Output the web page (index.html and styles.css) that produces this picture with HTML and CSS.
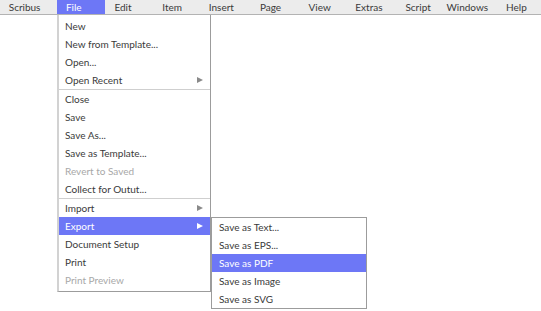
FILE: index.html
```html
<!DOCTYPE html>
<html>
<head>
  <title>Scribus File Menu</title>
  <link rel="stylesheet" href="styles.css">
</head>
<body>
  <div class="menubar">
    <div class="bar-item">Scribus</div>
    <div class="bar-item active">File</div>
    <div class="bar-item">Edit</div>
    <div class="bar-item">Item</div>
    <div class="bar-item">Insert</div>
    <div class="bar-item">Page</div>
    <div class="bar-item">View</div>
    <div class="bar-item">Extras</div>
    <div class="bar-item">Script</div>
    <div class="bar-item">Windows</div>
    <div class="bar-item">Help</div>
  </div>

  <div class="menu">
    <div class="item">New</div>
    <div class="item">New from Template...</div>
    <div class="item">Open...</div>
    <div class="item">Open Recent <span class="arrow"></span></div>
    <div class="sep"></div>
    <div class="item">Close</div>
    <div class="item">Save</div>
    <div class="item">Save As...</div>
    <div class="item">Save as Template...</div>
    <div class="item disabled">Revert to Saved</div>
    <div class="item">Collect for Outut...</div>
    <div class="sep"></div>
    <div class="item">Import <span class="arrow"></span></div>
    <div class="item selected has-sub">Export <span class="arrow"></span>
      <!-- export submenu -->
      <div class="submenu">
        <div class="item">Save as Text...</div>
        <div class="item">Save as EPS...</div>
        <div class="item selected">Save as PDF</div>
        <div class="item">Save as Image</div>
        <div class="item">Save as SVG</div>
      </div>
    </div>
    <div class="item">Document Setup</div>
    <div class="item">Print</div>
    <div class="item disabled">Print Preview</div>
  </div>
</body>
</html>
```

FILE: styles.css
```css
body {
  margin: 0;
  background-color: #fff;
  font-family: Lato, "Liberation Sans", sans-serif;
  font-size: 10px;
  color: #3a3a3a;
}

.menubar {
  display: flex;
  height: 14px;
  line-height: 14px;
  background-color: #ececec;
  border-bottom: 1px solid #b3b3b3;
}

.bar-item {
  flex: 1;
  position: relative;
  text-align: center;
}

.bar-item.active {
  color: #fff;
}

/* highlight sits under the dropdown, not the cell */
.bar-item.active::before {
  content: "";
  position: absolute;
  left: 8px;
  top: 0;
  width: 48px;
  height: 14px;
  background-color: #6d77f6;
  z-index: -1;
}

.bar-item.active {
  z-index: 0;
}

.menu {
  position: absolute;
  left: 57px;
  top: 15px;
  width: 151px;
  padding: 2px 0;
  background-color: #fff;
  border-left: 2px solid #d2d2d2;
  border-right: 1px solid #9c9c9c;
  border-bottom: 1px solid #9c9c9c;
}

.item {
  display: flex;
  justify-content: space-between;
  align-items: center;
  height: 18px;
  line-height: 18px;
  padding: 0 7px 0 6px;
  white-space: nowrap;
}

.item.selected {
  background-color: #6d77f6;
  color: #fff;
}

.item.disabled {
  color: #a8a8a8;
}

.sep {
  height: 1px;
  background-color: #cfcfcf;
}

.arrow {
  width: 0;
  height: 0;
  border-top: 3.5px solid transparent;
  border-bottom: 3.5px solid transparent;
  border-left: 6px solid #8a8a8a;
}

.item.selected .arrow {
  border-left-color: #fff;
}

.has-sub {
  position: relative;
}

.submenu {
  position: absolute;
  left: calc(100% + 1px);
  top: 0;
  width: 154px;
  background-color: #fff;
  border: 1px solid #9c9c9c;
  color: #3a3a3a;
}

.submenu .item {
  padding-left: 7px;
}

.submenu .item.selected {
  color: #fff;
}
```
